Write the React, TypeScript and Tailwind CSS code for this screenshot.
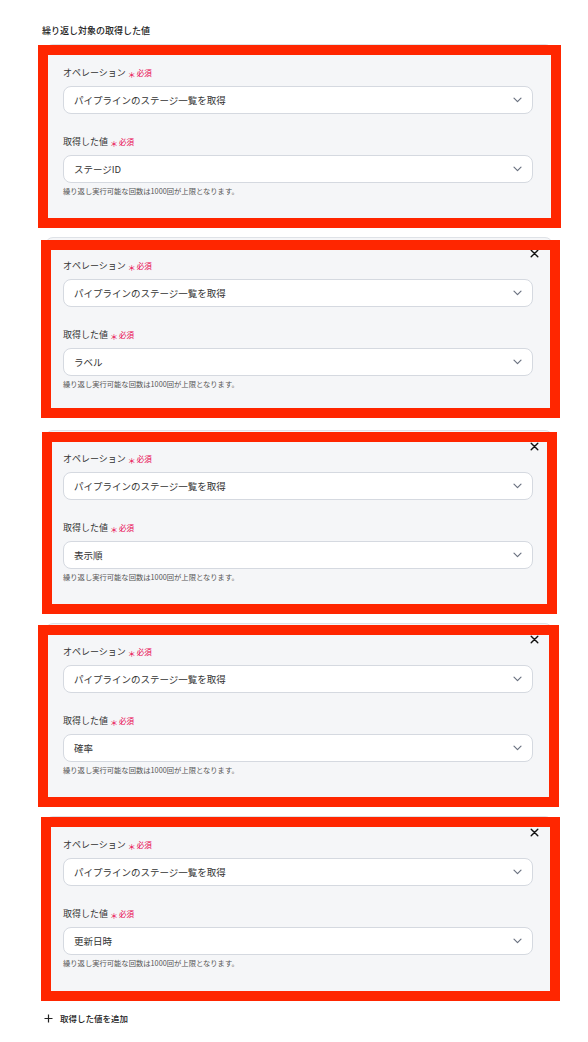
import React from "react";

const items = [
  { value: "ステージID", close: false, red: "-left-[8px] top-0 -right-[9px] -bottom-[4px]" },
  { value: "ラベル", close: true, red: "-left-[5px] top-[2px] -right-[8px] -bottom-[1px]" },
  { value: "表示順", close: true, red: "-left-[4px] top-[1px] -right-[5px] -bottom-[4px]" },
  { value: "確率", close: true, red: "-left-[8px] top-[1px] -right-[7px] -bottom-[4px]" },
  { value: "更新日時", close: true, red: "-left-[5px] top-0 -right-[8px] -bottom-[5px]" },
];

function Chevron() {
  return (
    <svg width="9" height="6" viewBox="0 0 9 6" fill="none">
      <path d="M1 1.2l3.5 3.5L8 1.2" stroke="#6b7280" strokeWidth="1.2" strokeLinecap="round" strokeLinejoin="round" />
    </svg>
  );
}

function Label({ text }: { text: string }) {
  return (
    <div className="flex items-center h-[16px] leading-[16px]">
      <span className="text-[9px] text-[#333]">{text}</span>
      <span className="ml-[2px] text-[8px] text-[#e8004c] leading-none translate-y-[1.5px]">＊</span>
      <span className="ml-[1px] text-[7.5px] text-[#e8004c]">必須</span>
    </div>
  );
}

function Select({ value }: { value: string }) {
  return (
    <div className="h-[28px] rounded-[8px] border border-[#d5d9e0] bg-white flex items-center justify-between pl-[10px] pr-[10px]">
      <span className="text-[9.5px] text-[#333]">{value}</span>
      <Chevron />
    </div>
  );
}

export default function App() {
  return (
    <div
      className="w-[588px] min-h-[1042px] bg-white pt-[23px]"
      style={{ fontFamily: '"Noto Sans CJK JP", "Noto Sans", sans-serif' }}
    >
      <div className="pl-[42px] h-[16px] leading-[16px] text-[9px] font-medium text-[#222] mb-[5px]">
        繰り返し対象の取得した値
      </div>
      <div className="flex flex-col gap-[12px]">
        {items.map((it, i) => (
          <div
            key={i}
            className="relative ml-[45px] w-[508px] h-[181px] rounded-[8px] border border-[#dfe2e7] bg-[#f5f6f8] pl-[17px] pr-[19px] pt-[20px]"
          >
            <Label text="オペレーション" />
            <div className="mt-[5px]">
              <Select value="パイプラインのステージ一覧を取得" />
            </div>
            <div className="mt-[20px]">
              <Label text="取得した値" />
            </div>
            <div className="mt-[5px]">
              <Select value={it.value} />
            </div>
            <div className="mt-[2px] text-[7.3px] leading-[12px] text-[#555]">
              繰り返し実行可能な回数は1000回が上限となります。
            </div>
            {it.close && (
              <div className="absolute right-[13px] top-[11px] w-[9px] h-[9px]">
                <svg width="9" height="9" viewBox="0 0 9 9" fill="none">
                  <path d="M1.2 1.2l6.6 6.6M7.8 1.2L1.2 7.8" stroke="#111" strokeWidth="1.4" strokeLinecap="round" />
                </svg>
              </div>
            )}
            <div className={`pointer-events-none absolute border-[10px] border-[#ff2600] ${it.red}`} />
          </div>
        ))}
      </div>
      <div className="mt-[13px] pl-[44px] flex items-center gap-[7px] h-[16px]">
        <svg width="9" height="9" viewBox="0 0 9 9" fill="none">
          <path d="M4.5 0.5v8M0.5 4.5h8" stroke="#222" strokeWidth="1.2" />
        </svg>
        <span className="text-[8.5px] font-medium text-[#222]">取得した値を追加</span>
      </div>
    </div>
  );
}
